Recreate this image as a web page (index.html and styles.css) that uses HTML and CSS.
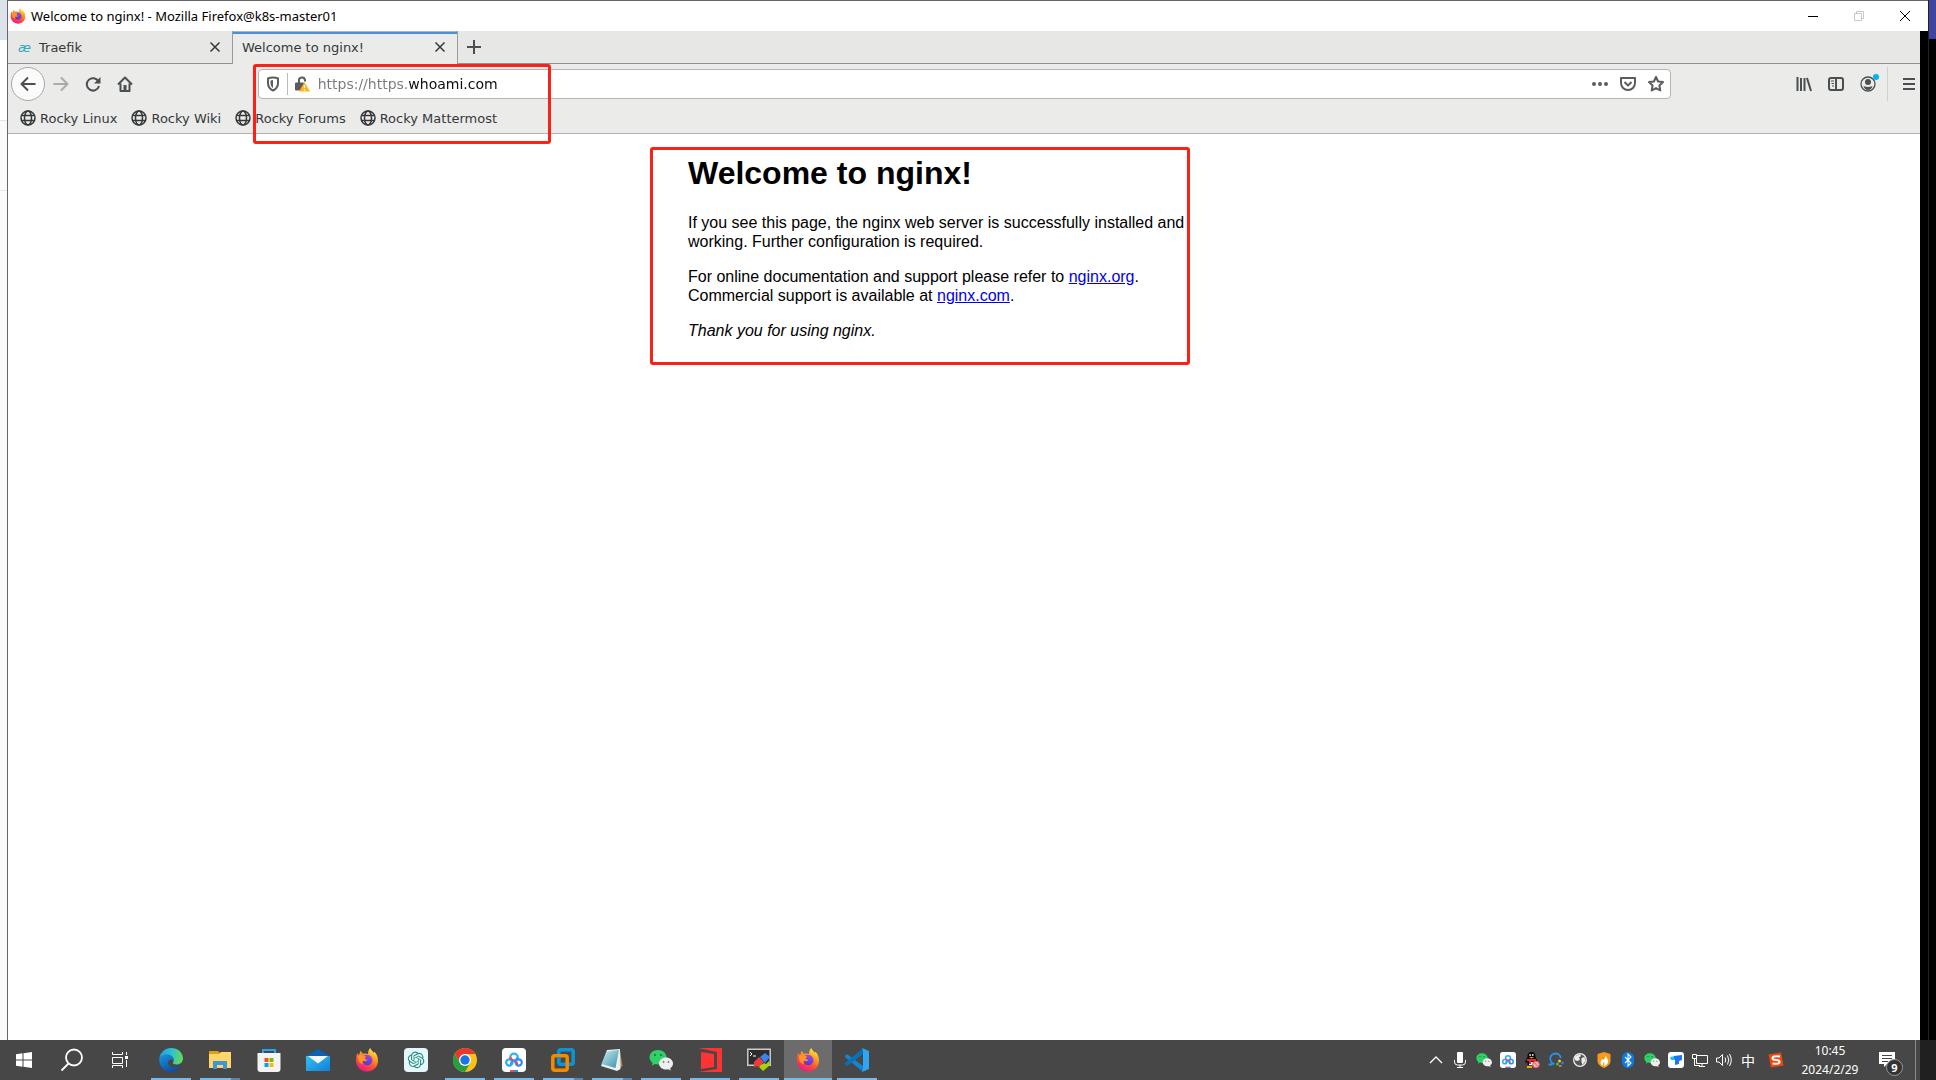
FILE: index.html
```html
<!DOCTYPE html>
<html lang="en">
<head>
<meta charset="utf-8">
<title>Welcome to nginx!</title>
<link rel="stylesheet" href="styles.css">
</head>
<body>
<svg class="defs" aria-hidden="true">
  <defs>
    <linearGradient id="ffa" x1=".8" y1="0" x2=".3" y2="1"><stop offset="0" stop-color="#fff44f"/><stop offset=".35" stop-color="#ffa01e"/><stop offset=".65" stop-color="#ff5036"/><stop offset="1" stop-color="#f0148a"/></linearGradient>
    <linearGradient id="ffb" x1=".7" y1="0" x2=".3" y2="1"><stop offset="0" stop-color="#a347e8"/><stop offset="1" stop-color="#4a3bcb"/></linearGradient>
    <linearGradient id="edgea" x1="0" y1=".3" x2="1" y2=".4"><stop offset="0" stop-color="#1f9ee0"/><stop offset=".5" stop-color="#2cc2d6"/><stop offset="1" stop-color="#65db52"/></linearGradient>
    <linearGradient id="edgeb" x1="0" y1="0" x2=".6" y2="1"><stop offset="0" stop-color="#1b96dd"/><stop offset="1" stop-color="#0b4ea2"/></linearGradient>
    <linearGradient id="mail" x1="0" y1="0" x2="1" y2="1"><stop offset="0" stop-color="#35c1f5"/><stop offset="1" stop-color="#0f7fd6"/></linearGradient>
    <linearGradient id="pad" x1="0" y1="0" x2="1" y2="1"><stop offset="0" stop-color="#c4eef4"/><stop offset="1" stop-color="#3f8ea6"/></linearGradient>
    <symbol id="firefox" viewBox="0 0 24 24">
      <path fill="url(#ffa)" d="M2.2 5.2 4 7l1.6-4.2 2.2 3c2-.7 4-.4 5.4.3-.4-2.300.4-4.400 2.300-6.100.3 2.100 2 3.100 3.300 4.700l.6-.9c2.300 2.300 3.700 5.400 3.600 9C23 19 18.200 23.500 12.200 23.500S1 18.900 1 12.800c0-3 .3-5.400 1.200-7.600z"/>
      <path fill="url(#ffb)" d="M8.600 7.600c2.300-1.500 6-1 7.800 1.400 1.700 2.400 1.200 5.700-.9 7.300-2.300 1.700-5.800 1.300-7.300-1.200-.8-1.300-.5-2.600.2-2.600 1.500.8 3 .2 4-.7-1.400-.2-2.700-.7-2.800-1.700-.1-.9.500-1.200 1.300-1.700-.7-.4-1.500-.8-2.300-.8z"/>
      <path fill="#ff9428" d="M3 8.500c1.800-2 4.300-1.700 5.700-.8.5.5 1.300 1 2.400 1.100-.3.900-1.500 1.200-1.600 2 .1 1 1.800 1.200 3 1-1 1.500-2.900 1.900-4.700 1-.7.600-.5 2.300.4 3.300-3.500-.3-5.600-3.400-5.200-7.600z"/>
    </symbol>
    <symbol id="wechat" viewBox="0 0 24 24">
      <path fill="#2fd166" d="M9 2C4.200 2 .5 5.200.5 9.200c0 2.200 1.200 4.200 3 5.500L3 17.500l3-1.600c1 .3 2 .5 3 .5 4.700 0 8.500-3.200 8.500-7.200S13.700 2 9 2z"/>
      <circle cx="6" cy="7" r="1" fill="#176b36"/><circle cx="12" cy="7" r="1" fill="#176b36"/>
      <path fill="#efefef" d="M17 9.500c-4 0-7 2.700-7 6s3 6 7 6c.8 0 1.600-.1 2.300-.3l2.500 1.300-.6-2.300c1.700-1.100 2.800-2.800 2.800-4.700 0-3.300-3.100-6-7-6z"/>
      <circle cx="14.600" cy="14" r=".9" fill="#777"/><circle cx="19.400" cy="14" r=".9" fill="#777"/>
    </symbol>
    <symbol id="baidu" viewBox="0 0 24 24">
      <rect width="24" height="24" rx="4" fill="#fff"/>
      <g fill="none" stroke-width="2.200"><path d="M8.200 9.500a3.800 3.800 0 0 1 7.600 0" stroke="#27b4f5"/><circle cx="7.300" cy="14.500" r="3.100" stroke="#1fb0f0"/><circle cx="16.700" cy="14.500" r="3.100" stroke="#2a8bf5"/><path d="M8.200 9q.3 2.500 3.800 3.800T15 16.500" stroke="#f0455a"/><path d="M15.800 9q-.3 2.500-3.800 3.800T9 16.500" stroke="#2a9af5"/></g>
      <path fill="#f0455a" d="M8 22h4v2H8z"/><path fill="#2a8bf5" d="M12 22h4v2h-4z"/>
    </symbol>
    <symbol id="globe" viewBox="0 0 16 16">
      <g fill="none" stroke="currentColor" stroke-width="1.500"><circle cx="8" cy="8" r="7"/><ellipse cx="8" cy="8" rx="3.500" ry="7"/><path d="M1.500 5.500h13M1.500 10.500h13"/></g>
    </symbol>
    <symbol id="close" viewBox="0 0 12 12"><path d="m1.500 1.500 9 9m0-9-9 9" stroke="currentColor" stroke-width="1.500" fill="none"/></symbol>
  </defs>
</svg>

<div class="desktop">
  <div class="behind-left"></div>
  <div class="window">
    <header class="titlebar">
      <svg class="i16"><use href="#firefox"/></svg>
      <span class="window-title">Welcome to nginx! - Mozilla Firefox@k8s-master01</span>
      <button class="winbtn" aria-label="Minimize"><svg viewBox="0 0 10 10"><path d="M0 5.500h10" stroke="#000"/></svg></button>
      <button class="winbtn" aria-label="Restore"><svg viewBox="0 0 10 10" fill="none" stroke="#c8c8c8"><path d="M.5 2.500h7v7h-7zM2.500 2.500v-2h7v7h-2"/></svg></button>
      <button class="winbtn" aria-label="Close window"><svg viewBox="0 0 10 10" stroke="#000"><path d="m0 0 10 10m0-10L0 10"/></svg></button>
    </header>
    <div class="browser">
      <div class="tabs">
        <div class="tab">
          <span class="ae">æ</span><span class="tab-label">Traefik</span>
          <button class="tab-close" aria-label="Close Traefik"><svg><use href="#close"/></svg></button>
        </div>
        <div class="tab tab-active">
          <span class="tab-label">Welcome to nginx!</span>
          <button class="tab-close" aria-label="Close Welcome to nginx!"><svg><use href="#close"/></svg></button>
        </div>
        <button class="newtab" aria-label="New tab"><svg viewBox="0 0 14 14"><path d="M7 0v14M0 7h14" stroke="currentColor" stroke-width="2"/></svg></button>
      </div>
      <nav class="toolbar">
        <button class="back" aria-label="Back"><svg class="i16" viewBox="0 0 16 16"><path d="M15.500 8H1.500M8 1.500 1.500 8 8 14.500" class="line"/></svg></button>
        <button class="tool faded" aria-label="Forward"><svg class="i16" viewBox="0 0 16 16"><path d="M.5 8h14M8 1.500 14.500 8 8 14.500" class="line"/></svg></button>
        <button class="tool" aria-label="Reload"><svg class="i16" viewBox="0 0 16 16"><path d="M13.500 5.500A6.200 6.200 0 1 0 14 10" class="line"/><path d="M15.500 1v6.500H9z" fill="currentColor"/></svg></button>
        <button class="tool" aria-label="Home"><svg class="i16" viewBox="0 0 16 16"><path d="M1 8.500 8 1.500l7 7M3.500 7.500V15h9V7.500" class="line"/><path d="M6.500 9h3v6h-3z" fill="currentColor"/></svg></button>
        <span class="spring"></span>
        <div class="urlbar">
          <svg class="i16" viewBox="0 0 16 16"><path d="M8 1.500c2 0 3.800.4 5 1v4.500c0 3.500-1.800 6-5 7.500-3.200-1.500-5-4-5-7.500V2.500c1.200-.6 3-1 5-1z" class="line"/><path d="M8 4v8C6.500 11 5.500 9.500 5.500 7V4.500z" fill="currentColor"/></svg>
          <span class="url-divider"></span>
          <svg class="i16" viewBox="0 0 16 16"><path d="M5 8V5a3 3 0 0 1 6-1v1.500" class="line"/><rect x="1" y="6.500" width="9" height="8" rx="1" fill="currentColor"/><path d="M10.500 6 16 15.500H5z" fill="#ffb31a"/><path d="M10.500 9v3m0 1v1.500" stroke="#fff" stroke-width="1.300"/></svg>
          <input class="url" type="text" aria-label="Address" value="https://https.whoami.com" spellcheck="false">
          <button class="url-action" aria-label="Page actions"><svg class="i16" viewBox="0 0 16 16" fill="currentColor"><circle cx="2" cy="8" r="2"/><circle cx="8" cy="8" r="2"/><circle cx="14" cy="8" r="2"/></svg></button>
          <button class="url-action" aria-label="Save to Pocket"><svg class="i16" viewBox="0 0 16 16"><path d="M1 2h14v5a7 7 0 0 1-14 0z" class="line"/><path d="m4.500 6 3.500 3.500L11.500 6" class="line"/></svg></button>
          <button class="url-action" aria-label="Bookmark this page"><svg class="i16" viewBox="0 0 16 16"><path d="m8 1 2.100 4.500 4.900.6-3.600 3.400.9 5L8 12.100l-4.300 2.400.9-5L1 6.100l4.900-.6z" class="line"/></svg></button>
        </div>
        <span class="spring"></span>
        <button class="tool" aria-label="Library"><svg class="i16" viewBox="0 0 16 16"><path d="M1.500 1v14M5 2v13M8.500 2v13M11 2l4 13" class="line"/></svg></button>
        <button class="tool" aria-label="Sidebars"><svg class="i16" viewBox="0 0 16 16"><rect x="1" y="2" width="14" height="12" rx="2" class="line"/><path d="M8 2v12" class="line"/><path d="M3 5h3M3.500 7.500H6M4 10h2" stroke="currentColor"/></svg></button>
        <button class="tool account" aria-label="Account"><svg class="i16" viewBox="0 0 16 16"><circle cx="8" cy="8" r="7" fill="none" stroke="currentColor" stroke-width="1.300"/><circle cx="8" cy="6" r="3" fill="currentColor"/><path d="M3.500 10q4.500 2 9 0-1 4-4.500 4t-4.500-4z" fill="currentColor"/></svg><span class="dot"></span></button>
        <span class="tool-divider"></span>
        <button class="menu" aria-label="Menu"><svg viewBox="0 0 12 12"><path d="M0 1h12M0 6h12M0 11h12" stroke="currentColor" stroke-width="2"/></svg></button>
      </nav>
      <nav class="bookmarks">
        <a href="#"><svg class="i16"><use href="#globe"/></svg>Rocky Linux</a>
        <a href="#"><svg class="i16"><use href="#globe"/></svg>Rocky Wiki</a>
        <a href="#"><svg class="i16"><use href="#globe"/></svg>Rocky Forums</a>
        <a href="#"><svg class="i16"><use href="#globe"/></svg>Rocky Mattermost</a>
      </nav>
      <span class="mark mark-url"></span>
      <main class="page">
        <article class="nginx">
          <h1>Welcome to nginx!</h1>
          <p>If you see this page, the nginx web server is successfully installed and working. Further configuration is required.</p>
          <p>For online documentation and support please refer to <a href="#">nginx.org</a>.<br>Commercial support is available at <a href="#">nginx.com</a>.</p>
          <p><em>Thank you for using nginx.</em></p>
          <span class="mark mark-page"></span>
        </article>
      </main>
    </div>
  </div>
  <div class="behind-right"></div>
</div>

<footer class="taskbar">
  <button class="task" aria-label="Start"><svg class="i16" viewBox="0 0 16 16" fill="#fff"><path d="M0 2.200 6.500 1.300v6.200H0zM7.500 1.200 16 0v7.500H7.500zM0 8.500h6.500v6.200L0 13.800zM7.500 8.500H16V16l-8.500-1.200z"/></svg></button>
  <button class="task" aria-label="Search"><svg viewBox="0 0 24 24" fill="none" stroke="#fff" stroke-width="1.800"><circle cx="14" cy="9.500" r="8"/><path d="m8.500 15.500-7 7"/></svg></button>
  <button class="task" aria-label="Task view"><svg class="i16" viewBox="0 0 16 16" fill="none" stroke="#fff"><path d="M.5 0v2.500h10V0M.5 5.500h10v6H.5zM.5 16v-2.500h10V16M14.500 0v3M14.500 8v7"/><path d="M13 4h3v3h-3z" fill="#fff" stroke="none"/></svg></button>
  <div class="apps">
    <button class="task open" aria-label="Edge"><svg viewBox="0 0 24 24"><path fill="url(#edgeb)" d="M.3 11C2 7 6 5.500 9.500 6.500c4 1 5.500 3.500 5 6-3-2.500-6 0-5.500 3 .8 3.500 5.500 5 10.500 3.500l2.500-1.200C20 21.500 16.500 24 12 24 5 24-.3 18 .3 11z"/><path fill="url(#edgea)" d="M.3 11C.8 4.500 6 0 12 0c7 0 12 4.800 12 10.500 0 3.800-3 6-6.300 6-3 0-4.200-1-3.700-2 1.500-2 .8-5-1.500-6.700C9 5.300 2.700 6 .3 11z"/></svg></button>
    <button class="task open many" aria-label="File Explorer"><svg viewBox="0 0 24 24"><path fill="#e0a010" d="M1 3h9l2 2v4H1z"/><path fill="#ffd767" d="M1 6h10l2-2h10v16H1z"/><path fill="#3a96dd" d="M5 13h14v8h-4v-4H9v4H5z"/></svg></button>
    <button class="task" aria-label="Microsoft Store"><svg viewBox="0 0 24 24"><path d="M6 6V2h12v4" fill="none" stroke="#25a5f0" stroke-width="2"/><path fill="#f3f3f3" d="M.5 5h23v16a3 3 0 0 1-3 3h-17a3 3 0 0 1-3-3z"/><path fill="#f25022" d="M7.500 10h4v4h-4z"/><path fill="#7fba00" d="M12.500 10h4v4h-4z"/><path fill="#00a4ef" d="M7.500 15h4v4h-4z"/><path fill="#ffb900" d="M12.500 15h4v4h-4z"/></svg></button>
    <button class="task" aria-label="Mail"><svg viewBox="0 0 24 24"><path fill="#0b62b3" d="M0 8 12 1l12 7v3H0z"/><path fill="url(#mail)" d="M0 8h24v15H0z"/><path fill="#f5f5f5" d="M2 8h20L12 15.500z"/></svg></button>
    <button class="task" aria-label="Firefox"><svg><use href="#firefox"/></svg></button>
    <button class="task" aria-label="ChatGPT"><svg viewBox="0 0 24 24"><rect width="24" height="24" rx="4" fill="#e6f6fa"/><path transform="translate(3.800 3.600) scale(.69)" fill="#23917c" d="M22.282 9.821a5.985 5.985 0 0 0-.516-4.910 6.046 6.046 0 0 0-6.510-2.900A6.065 6.065 0 0 0 4.981 4.182a5.985 5.985 0 0 0-3.998 2.900 6.046 6.046 0 0 0 .743 7.097 5.980 5.980 0 0 0 .511 4.911 6.051 6.051 0 0 0 6.515 2.900A5.985 5.985 0 0 0 13.260 24a6.056 6.056 0 0 0 5.772-4.206 5.989 5.989 0 0 0 3.998-2.900 6.056 6.056 0 0 0-.748-7.073zm-9.022 12.608a4.476 4.476 0 0 1-2.876-1.041l.142-.080 4.778-2.758a.795.795 0 0 0 .393-.681v-6.737l2.020 1.169a.071.071 0 0 1 .038.052v5.583a4.504 4.504 0 0 1-4.495 4.494zm-9.661-4.125a4.471 4.471 0 0 1-.535-3.014l.142.085 4.783 2.758a.771.771 0 0 0 .781 0l5.843-3.369v2.332a.080.080 0 0 1-.033.062L9.740 19.950a4.499 4.499 0 0 1-6.141-1.646zM2.341 7.896a4.485 4.485 0 0 1 2.366-1.973V11.600a.766.766 0 0 0 .388.677l5.814 3.354-2.020 1.169a.076.076 0 0 1-.071 0l-4.830-2.787A4.504 4.504 0 0 1 2.341 7.872zm16.596 3.856-5.833-3.388L15.119 7.200a.076.076 0 0 1 .071 0l4.830 2.791a4.494 4.494 0 0 1-.677 8.104v-5.677a.790.790 0 0 0-.407-.667zm2.011-3.023-.142-.085-4.774-2.782a.776.776 0 0 0-.785 0L9.409 9.230V6.897a.066.066 0 0 1 .028-.062l4.830-2.787a4.499 4.499 0 0 1 6.680 4.660zM8.307 12.863l-2.020-1.164a.080.080 0 0 1-.038-.057V6.074a4.499 4.499 0 0 1 7.376-3.454l-.142.081L8.704 5.459a.795.795 0 0 0-.393.681zm1.098-2.365 2.602-1.500 2.607 1.500v2.999l-2.597 1.500-2.607-1.500z"/></svg></button>
    <button class="task open" aria-label="Chrome"><svg viewBox="0 0 24 24"><circle cx="12" cy="12" r="12" fill="#fbc116"/><path fill="#e33b2e" d="M1.600 6A12 12 0 0 1 22.400 6H12L6.800 15z"/><path fill="#269f42" d="M1.600 6A12 12 0 0 0 12 24l5.200-9-10.400 0z"/><circle cx="12" cy="12" r="6" fill="#fff"/><circle cx="12" cy="12" r="4.700" fill="#1a73e8"/></svg></button>
    <button class="task open" aria-label="Baidu Netdisk"><svg><use href="#baidu"/></svg></button>
    <button class="task open many" aria-label="VMware"><svg viewBox="0 0 24 24" fill="none" stroke-width="3.500"><rect x="7.800" y="1.800" width="14.400" height="14.400" rx="2" stroke="#0a95d4"/><rect x="1.800" y="7.800" width="14.400" height="14.400" rx="2" stroke="#f38b00"/><path d="M7.800 13V9" stroke="#0a95d4"/></svg></button>
    <button class="task open many" aria-label="Notepad"><svg viewBox="0 0 24 24"><path fill="#b98b4b" d="m20 3 2.500 15-3 2z"/><path fill="#e8f0f2" d="m7 2 13-1 .5 20-3.500 2L1 18z"/><path fill="url(#pad)" d="M7 3.500 19 2l-3.500 18L1.500 16z"/></svg></button>
    <button class="task open" aria-label="WeChat"><svg><use href="#wechat"/></svg></button>
    <button class="task open" aria-label="Remote desktop"><svg viewBox="0 0 24 24" fill="#ff3234"><path d="M0 0h24v24H0l19-3V4z"/><path d="m3 4 13 2v13L3 21z"/></svg></button>
    <button class="task open" aria-label="Terminal"><svg viewBox="0 0 24 24"><path d="M.8 1.300h22.400v16H.8z" fill="#2c2c2c" stroke="#ccc" stroke-width="1.500"/><path d="m3 4 2 2-2 2M6 8h3" stroke="#fff" fill="none"/><path fill="#ee3b3b" d="m7 14 5-5 5 5-5 5-2-1-3 1z"/><path fill="#3c82ee" d="m13 9 5-4 5 4-5 6z"/><path fill="#a5d40b" d="m12 19 5-4 2 1 3-3 1 4-7 6z"/></svg></button>
    <button class="task open active" aria-label="Firefox, k8s-master01"><svg><use href="#firefox"/></svg></button>
    <button class="task open" aria-label="Visual Studio Code"><svg viewBox="0 0 24 24"><path fill="#1585d0" d="M0 8l2-2 16 12v6L0 9z"/><path fill="#0d6fb8" d="M0 16l2 2L18 6V0L0 15z"/><path fill="#30a5f1" d="M17 0l7 3v18l-7 3 1-2V2z"/></svg></button>
  </div>
  <div class="tray">
    <button class="t" aria-label="Show hidden icons"><svg class="i16" viewBox="0 0 16 16"><path d="m2 11 6-6 6 6" fill="none" stroke="#fff" stroke-width="1.300"/></svg></button>
    <button class="t" aria-label="Microphone"><svg class="i16" viewBox="0 0 16 16"><rect x="5" width="6" height="11" rx="1" fill="#fff"/><path d="M2.500 8v2q0 3 3 3h5q3 0 3-3V8M8 13v2.500M5 15.500h6" fill="none" stroke="#fff"/></svg></button>
    <button class="t" aria-label="WeChat"><svg class="i16"><use href="#wechat"/></svg></button>
    <button class="t" aria-label="Baidu Netdisk"><svg class="i16"><use href="#baidu"/></svg></button>
    <button class="t" aria-label="QQ"><svg class="i16" viewBox="0 0 16 16"><path fill="#0a0a0a" d="M7.500 0C4.500 0 3.300 2.300 3.500 5L1 10l1 1 1.500-1v3h8v-3l1.500 1 1-1-2.500-5c.2-2.700-1-5-4-5z"/><path fill="#fff" d="M5.500 2h1.200v2H5.500zM8.200 2h1.200v2H8.200zM5 10h5v3H5z"/><path fill="#f5a800" d="M5 5h5l-2.500 1.500zM3 14h5v2H3z"/><path fill="#e4272f" d="M3 7h9v2H7v3H5V9H3z"/><circle cx="12" cy="12.500" r="3.400" fill="#f6b5b5" stroke="#e7484f"/><path d="m10 10.500 4 4" stroke="#e7484f"/></svg></button>
    <button class="t" aria-label="Sync"><svg class="i16" viewBox="0 0 16 16"><path d="M6.500 12A5.300 5.300 0 1 1 12.800 6M.5 12.500h4" fill="none" stroke="#2b92f0" stroke-width="1.800"/><circle cx="11.500" cy="9" r="1.500" fill="#ffc91a"/><circle cx="9.500" cy="12" r="1.500" fill="#3ec24b"/><circle cx="14.500" cy="11" r="1.500" fill="#2b78f0"/><path d="M11 14h2.500" stroke="#f29b1d" stroke-width="1.500"/></svg></button>
    <button class="t" aria-label="Network globe"><svg class="i16" viewBox="0 0 16 16"><circle cx="8" cy="8" r="6.300" fill="#555" stroke="#eee" stroke-width="1.300"/><path fill="#eee" d="M3 4.500 8 2l1 2-2 1.500L8 8 5 9l-2-1zM9.500 6l3-1 1 4-3 4-1-3z"/></svg></button>
    <button class="t" aria-label="Security"><svg class="i16" viewBox="0 0 16 16"><path fill="#f79a1c" d="M8 0l6.500 2v7c0 3-3 5.500-6.500 7-3.500-1.500-6.500-4-6.500-7V2z"/><path fill="#fff" d="M10 3c0 3 2.500 4 2 7-.3 2-2 3.500-4 4 1-2 .5-3 0-4-1 1-1.500 2-1 4-3-2-3-4-1-7l1 1c2-1 2.500-3 3-5z"/></svg></button>
    <button class="t" aria-label="Bluetooth"><svg class="i16" viewBox="0 0 16 16"><rect x="2" width="12" height="16" rx="6" fill="#0a7be6"/><path d="m5 5 6 6-3 3V2l3 3-6 6" fill="none" stroke="#fff" stroke-width="1.100"/></svg></button>
    <button class="t" aria-label="WeChat"><svg class="i16"><use href="#wechat"/></svg></button>
    <button class="t" aria-label="Todesk"><svg class="i16" viewBox="0 0 16 16"><rect width="16" height="16" rx="3" fill="#fff"/><path fill="#18c5ea" d="M2 5l5-1v4H3z"/><path fill="#1d74f5" d="M6 4l8-1v5l-3 1v3l-4 1V7H6z"/></svg></button>
    <button class="t" aria-label="Network"><svg class="i16" viewBox="0 0 16 16" fill="none" stroke="#fff"><path d="M4.500 3.500h11v8h-11zM.5 2.500h4v4h-4zM2.500 6.500v7H8M10 11.500v3M7 14.500h6"/></svg></button>
    <button class="t" aria-label="Volume"><svg class="i16" viewBox="0 0 16 16" fill="none" stroke="#fff"><path d="M.5 6H3l3.500-3.500v11L3 10H.5zM9 5.500q1.500 2.500 0 5M11.500 3.500q2.500 4.500 0 9M13.500 2q3.500 6 0 12"/></svg></button>
    <button class="t lang" lang="zh">中</button>
    <button class="t sogou" aria-label="Sogou input"><svg class="i16" viewBox="0 0 16 16"><path fill="#f4460c" d="M.5 2.500 13 .5l2.500 13L3 15.500z"/><path d="M12 4.500Q4 3.500 4.500 6.500 5 8 8.500 8t3 2.500Q10 12.500 4.500 11.500" fill="none" stroke="#fff" stroke-width="2"/></svg></button>
    <button class="clock"><time>10:45</time><time>2024/2/29</time></button>
    <button class="notify" aria-label="9 notifications"><svg viewBox="0 0 16 16"><path fill="#fff" d="M0 0h16v12H8l-3 3v-3H0z"/><path d="M3 3.500h10M3 6.500h10M3 9.500h6" stroke="#474747"/></svg><span class="badge">9</span></button>
  </div>
  <span class="peek"></span>
</footer>
</body>
</html>
```
FILE: styles.css
```css
* { box-sizing: border-box; }
body {
  margin: 0;
  min-height: 100vh;
  display: flex;
  flex-direction: column;
  background: #000;
  font-family: "DejaVu Sans", sans-serif;
  font-size: 13px;
  color: #35393b;
}
button {
  display: flex;
  align-items: center;
  justify-content: center;
  flex: none;
  padding: 0;
  border: 0;
  background: none;
  color: inherit;
  font: inherit;
}
svg { display: block; flex: none; }
.defs { position: absolute; width: 0; height: 0; }
.i16 { width: 16px; height: 16px; }
.line { fill: none; stroke: currentColor; stroke-width: 2; stroke-linejoin: round; }

/* window */
.desktop { flex: 1; display: flex; }
.behind-left {
  width: 7px;
  background: linear-gradient(#dde1ea 40px, #fff 40px 120px, #e4e4e4 120px 121px, #fafafa 121px 190px, #e8e8e8 190px 191px, #fafafa 191px);
}
.behind-right {
  width: 8px;
  border-left: 1px solid #222;
  background: linear-gradient(#3f459e 39px, #000 39px);
}
.window {
  flex: 1;
  display: flex;
  flex-direction: column;
  border-top: 1px solid #666;
  border-left: 1px solid #666;
}
.titlebar {
  display: flex;
  align-items: center;
  height: 30px;
  padding-left: 2px;
  background: #fff;
}
.window-title {
  flex: 1;
  margin-left: 5px;
  font: 13px/20px "Noto Sans", sans-serif;
  color: #000;
}
.winbtn { width: 46px; height: 30px; }
.winbtn svg { width: 10px; height: 10px; }
.browser {
  position: relative;
  flex: 1;
  display: flex;
  flex-direction: column;
  margin-right: 8px;
  background: #fff;
}

/* tabs */
.tabs {
  display: flex;
  height: 33px;
  background: #e7e7e5;
  box-shadow: inset 0 -1px #8f8f8f;
}
.tab {
  display: flex;
  align-items: center;
  width: 224px;
  padding: 0 11px 1px 10px;
}
.tab-active {
  width: 226px;
  padding: 0 11px 1px 9px;
  border: 1px solid #9a9a9a;
  border-width: 0 1px;
  background: #ebebe9;
  box-shadow: inset 0 1px #b5b5b5, inset 0 3px #4a90d9;
}
.ae { width: 21px; color: #36a9c0; font-style: italic; }
.tab-label { flex: 1; }
.tab-close svg { width: 12px; height: 12px; }
.newtab { width: 32px; padding-bottom: 1px; color: #4a4f51; }
.newtab svg { width: 14px; height: 14px; }

/* toolbar */
.toolbar {
  display: flex;
  align-items: center;
  height: 40px;
  padding-left: 3px;
  background: #ebebe9;
  color: #4a4f51;
}
.back {
  width: 34px;
  height: 34px;
  border: 1px solid #a8a8a6;
  border-radius: 50%;
  background: #fbfbfb;
}
.tool { position: relative; width: 32px; height: 32px; }
.faded { color: #aaaaa8; }
.spring { flex: 1; }
.urlbar {
  flex: 12;
  display: flex;
  align-items: center;
  height: 30px;
  padding: 0 6px;
  border: 1px solid #b4b4b2;
  border-radius: 4px;
  background: #fff;
  color: #5c5c5c;
}
.url-divider { width: 1px; height: 22px; margin: 0 6px; background: #bbb; }
.url {
  flex: 1;
  min-width: 0;
  margin-left: 8px;
  padding: 0;
  border: 0;
  outline: 0;
  font: inherit;
  font-size: 14px;
  line-height: 20px;
  color: transparent;
  background: linear-gradient(90deg, #7a7a7a 91px, #0c0c0d 91px);
  -webkit-background-clip: text;
  background-clip: text;
}
.url-action { width: 28px; height: 28px; }
.url-action:last-child { width: 16px; margin: 0 0 0 6px; }
.dot {
  position: absolute;
  top: 6px;
  right: 5px;
  width: 6px;
  height: 6px;
  border-radius: 50%;
  background: #00b3f4;
}
.tool-divider { width: 1px; height: 34px; margin: 0 10px 0 3px; background: #cfcfcd; }
.menu { width: 22px; }
.menu svg { width: 12px; height: 12px; }
.bookmarks {
  display: flex;
  gap: 14px;
  height: 30px;
  padding: 0 12px 1px;
  border-bottom: 1px solid #b3b3b1;
  background: #ebebe9;
}
.bookmarks a {
  display: flex;
  align-items: center;
  gap: 4px;
  color: inherit;
  text-decoration: none;
}

/* document */
.page { flex: 1; padding-left: 8px; overflow: hidden; }
.nginx {
  position: relative;
  width: 560px;
  max-width: 100%;
  margin: 0 auto;
  font: 16px/19px "Liberation Sans", Arial, sans-serif;
  color: #000;
}
.nginx h1 { margin: 21px 0; font-size: 32px; line-height: 37px; }
.nginx p { width: 520px; margin: 0 0 16px; }
.nginx a { color: #00e; }

/* red callouts drawn over the window */
.mark { position: absolute; border: 3px solid #fb2018; border-radius: 3px; }
.mark-url { left: 245px; top: 33px; width: 298px; height: 80px; }
.mark-page { left: -38px; top: -8px; width: 540px; height: 218px; }

/* taskbar */
.taskbar {
  display: flex;
  height: 40px;
  background: linear-gradient(90deg, #474747 calc(100% - 16px), #202020 calc(100% - 16px));
  color: #fff;
}
.task { position: relative; width: 48px; height: 40px; }
.task svg { width: 24px; height: 24px; }
.task .i16 { width: 16px; height: 16px; }
.apps { flex: 1; display: flex; gap: 1px; padding-left: 3px; }
.open::after {
  content: "";
  position: absolute;
  left: 4px;
  right: 4px;
  bottom: 0;
  height: 2px;
  background: #76b9ed;
}
.many::after { background: linear-gradient(90deg, #76b9ed 31px, #5686ad 31px); }
.active { background: #6c6c6c; }
.active::after { left: 0; right: 0; }
.tray { display: flex; align-items: center; }
.t { width: 24px; height: 40px; }
.lang { font: 14px "Noto Sans CJK SC", sans-serif; }
.sogou { margin-left: 4px; }
.clock {
  flex-direction: column;
  width: 84px;
  font: 12px/19px "Noto Sans", sans-serif;
}
.notify {
  position: relative;
  justify-content: flex-start;
  width: 43px;
  height: 40px;
  padding-left: 7px;
}
.notify svg { width: 16px; height: 16px; }
.badge {
  position: absolute;
  left: 14px;
  top: 19px;
  width: 17px;
  height: 17px;
  border: 1px solid #999;
  border-radius: 50%;
  background: #333;
  font: bold 11px/15px "Noto Sans", sans-serif;
}
.peek { width: 21px; border-left: 1px solid #8a8a8a; }
```
